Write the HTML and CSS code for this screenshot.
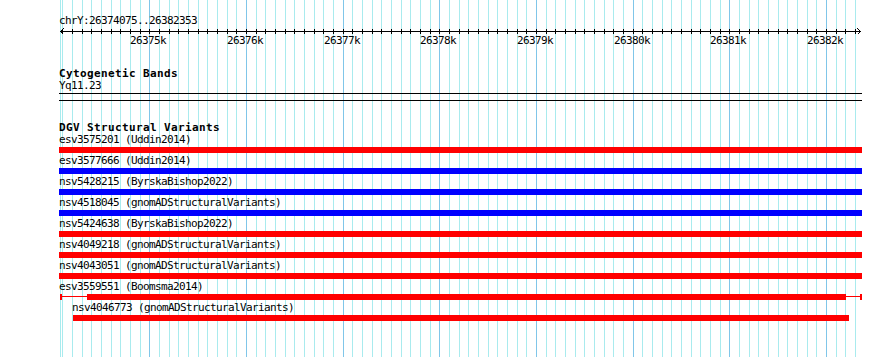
FILE: index.html
```html
<!DOCTYPE html>
<html lang="en">
<head>
    <meta charset="UTF-8">
    <meta name="viewport" content="width=device-width, initial-scale=1.0">
    <title>chrY:26374075-26382353</title>
    <link rel="stylesheet" href="styles.css">
</head>
<body>
    <div class="browser">
        <svg class="guidelines" id="guidelines" width="890" height="357"></svg>

        <div class="tracks">
            <div class="ruler">
                <div class="ruler-position">chrY:26374075..26382353</div>
                <svg class="ruler-axis" id="rulerAxis" width="803" height="22"></svg>
            </div>

            <div class="track track-cyto">
                <div class="track-title">Cytogenetic Bands</div>
                <div class="feature-label">Yq11.23</div>
                <div class="band"></div>
            </div>

            <div class="track track-dgv">
                <div class="track-title">DGV Structural Variants</div>

                <div class="feature">
                    <div class="feature-label">esv3575201 (Uddin2014)</div>
                    <div class="feature-bar loss"></div>
                </div>
                <div class="feature">
                    <div class="feature-label">esv3577666 (Uddin2014)</div>
                    <div class="feature-bar gain"></div>
                </div>
                <div class="feature">
                    <div class="feature-label">nsv5428215 (ByrskaBishop2022)</div>
                    <div class="feature-bar gain"></div>
                </div>
                <div class="feature">
                    <div class="feature-label">nsv4518045 (gnomADStructuralVariants)</div>
                    <div class="feature-bar gain"></div>
                </div>
                <div class="feature">
                    <div class="feature-label">nsv5424638 (ByrskaBishop2022)</div>
                    <div class="feature-bar loss"></div>
                </div>
                <div class="feature">
                    <div class="feature-label">nsv4049218 (gnomADStructuralVariants)</div>
                    <div class="feature-bar loss"></div>
                </div>
                <div class="feature">
                    <div class="feature-label">nsv4043051 (gnomADStructuralVariants)</div>
                    <div class="feature-bar loss"></div>
                </div>
                <div class="feature">
                    <div class="feature-label">esv3559551 (Boomsma2014)</div>
                    <div class="feature-span loss">
                        <div class="feature-bar loss" style="margin-left: 25px; width: 759px;"></div>
                    </div>
                </div>
                <div class="feature">
                    <div class="feature-label" style="margin-left: 13px;">nsv4046773 (gnomADStructuralVariants)</div>
                    <div class="feature-bar loss" style="margin-left: 14px; width: 776px;"></div>
                </div>
            </div>
        </div>
    </div>

    <script>
        var svgNS = "http://www.w3.org/2000/svg";
        var chromStart = 26374075;
        var chromEnd = 26382353;
        var dataLeft = 60.5;
        var dataWidth = 800;
        var panelLeft = 59;

        function bpToX(bp) {
            return dataLeft + (bp - chromStart) * dataWidth / (chromEnd - chromStart);
        }

        function addRect(svg, x, y, w, h, cls) {
            var r = document.createElementNS(svgNS, "rect");
            r.setAttribute("x", x);
            r.setAttribute("y", y);
            r.setAttribute("width", w);
            r.setAttribute("height", h);
            r.setAttribute("class", cls);
            svg.appendChild(r);
        }

        function addArrow(svg, points) {
            var p = document.createElementNS(svgNS, "polyline");
            p.setAttribute("points", points);
            p.setAttribute("class", "arrow");
            svg.appendChild(p);
        }

        var guides = document.getElementById("guidelines");
        var axis = document.getElementById("rulerAxis");

        // edge of the data area
        addRect(guides, 60, 0, 1, 357, "guide");

        // axis line with arrows at both ends
        addRect(axis, 1, 4, 801, 1, "tick");
        addArrow(axis, "4.5,1.5 1.5,4.5 4.5,7.5");
        addArrow(axis, "798.5,1.5 801.5,4.5 798.5,7.5");

        for (var bp = Math.ceil(chromStart / 100) * 100; bp <= chromEnd; bp += 100) {
            var x = Math.floor(bpToX(bp));
            var major = bp % 1000 === 0;
            addRect(guides, x, 0, 1, 357, major ? "guide guide-major" : "guide");
            addRect(axis, x - panelLeft, 2, 1, 5, "tick");
            if (major) {
                var t = document.createElementNS(svgNS, "text");
                t.setAttribute("x", x - panelLeft - 1);
                t.setAttribute("y", 17);
                t.setAttribute("class", "tick-label");
                t.textContent = (bp / 1000) + "k";
                axis.appendChild(t);
            }
        }
    </script>
</body>
</html>
```

FILE: styles.css
```css
body {
    margin: 0;
    background-color: #fff;
    color: #000;
    font-family: "DejaVu Sans Mono", "Liberation Mono", monospace;
    font-size: 11px;
    letter-spacing: -0.62px;
}
.browser {
    position: relative;
    width: 890px;
    height: 357px;
    overflow: hidden;
}
.guidelines {
    position: absolute;
    top: 0;
    left: 0;
    shape-rendering: crispEdges;
}
.guide {
    fill: #a9ebee;
}
.guide-major {
    fill: #80c6e9;
}
.tracks {
    position: relative;
    width: 803px;
    padding-left: 59px;
}
.ruler-position {
    padding-top: 15px;
    line-height: 12px;
}
.ruler-axis {
    display: block;
    shape-rendering: crispEdges;
}
.tick {
    fill: #000;
}
.arrow {
    fill: none;
    stroke: #000;
    stroke-width: 1;
}
.tick-label {
    font-family: "DejaVu Sans Mono", "Liberation Mono", monospace;
    font-size: 11px;
    letter-spacing: -0.62px;
    text-anchor: middle;
    fill: #000;
}
.track-cyto {
    margin-top: 19px;
}
.track-dgv {
    margin-top: 21px;
}
.track-title {
    line-height: 12px;
    font-weight: bold;
    letter-spacing: 0.38px;
}
.feature-label {
    line-height: 12px;
    white-space: nowrap;
}
.band {
    margin-top: 1px;
    height: 6px;
    border-top: 1px solid #000;
    border-bottom: 1px solid #000;
}
.feature {
    padding-bottom: 2px;
}
.feature-bar {
    margin-top: 1px;
    height: 6px;
    width: 803px;
}
.feature-bar.loss {
    background-color: #f00;
}
.feature-bar.gain {
    background-color: #00f;
}
.feature-span {
    display: flex;
    margin-top: 1px;
    margin-left: 1px;
    width: 798px;
    height: 6px;
    border-left: 2px solid #f00;
    border-right: 2px solid #f00;
    background: linear-gradient(#f00, #f00) 0 2px / 100% 1px no-repeat;
}
.feature-span .feature-bar {
    margin-top: 0;
}
```
